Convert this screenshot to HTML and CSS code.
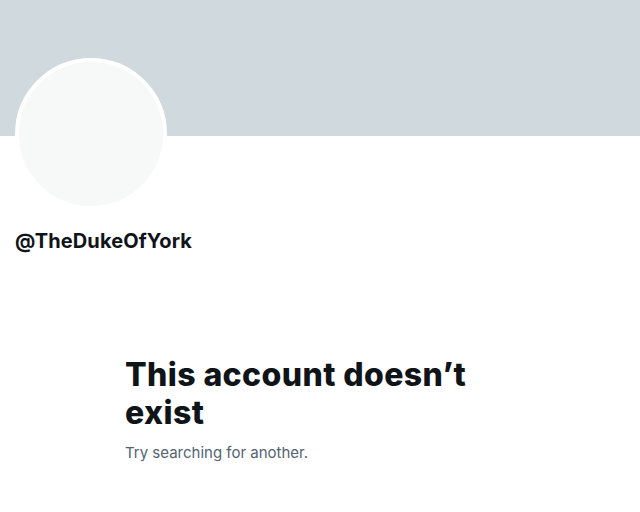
FILE: index.html
```html
<!DOCTYPE html>
<html lang="en">
<head>
    <meta charset="UTF-8">
    <meta name="viewport" content="width=device-width, initial-scale=1.0">
    <title>@TheDukeOfYork</title>
    <link rel="stylesheet" href="styles.css">
</head>
<body>
    <header class="banner"></header>

    <section class="profile">
        <div class="avatar"></div>
        <div class="handle">@TheDukeOfYork</div>
    </section>

    <main class="empty-state">
        <h1>This account doesn’t exist</h1>
        <p>Try searching for another.</p>
    </main>
</body>
</html>
```

FILE: styles.css
```css
body {
    margin: 0;
    padding: 0;
    background-color: #ffffff;
    font-family: Inter, "Noto Sans", sans-serif;
    color: #0f1419;
}

.banner {
    height: 136px;
    background-color: #cfd9de;
}

.profile {
    padding-left: 15px;
}

.avatar {
    width: 144px;
    height: 144px;
    margin-top: -78px;
    border: 4px solid #ffffff;
    border-radius: 50%;
    background-color: #f7f9f9;
}

.handle {
    margin-top: 19px;
    font-size: 20px;
    line-height: 24px;
    font-weight: 700;
    letter-spacing: 0.1px;
}

.empty-state {
    padding: 103px 0 0 125px;
}

.empty-state h1 {
    margin: 0;
    width: 380px;
    font-size: 32px;
    line-height: 38px;
    font-weight: 800;
    letter-spacing: 0.4px;
}

.empty-state p {
    margin: 11px 0 0;
    font-size: 15px;
    line-height: 20px;
    color: #536471;
}
```
